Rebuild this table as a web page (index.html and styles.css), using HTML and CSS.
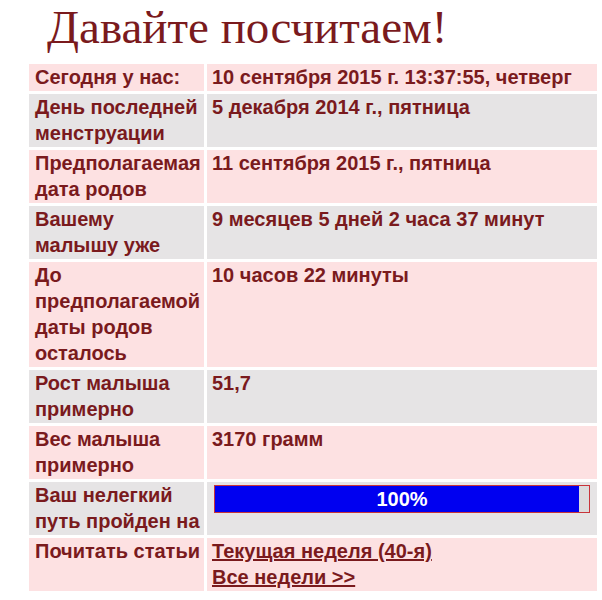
FILE: index.html
```html
<!DOCTYPE html>
<html lang="ru">
<head>
<meta charset="utf-8">
<title>Давайте посчитаем!</title>
<link rel="stylesheet" href="styles.css">
</head>
<body>
<h1 class="title">Давайте посчитаем!</h1>
<div class="calc">
  <div class="cell lbl pink">Сегодня у нас:</div>
  <div class="cell val pink">10 сентября 2015 г. 13:37:55, четверг</div>

  <div class="cell lbl gray">День последней менструации</div>
  <div class="cell val gray">5 декабря 2014 г., пятница</div>

  <div class="cell lbl pink">Предполагаемая дата родов</div>
  <div class="cell val pink">11 сентября 2015 г., пятница</div>

  <div class="cell lbl gray">Вашему малышу уже</div>
  <div class="cell val gray">9 месяцев 5 дней 2 часа 37 минут</div>

  <div class="cell lbl pink">До предполагаемой даты родов осталось</div>
  <div class="cell val pink">10 часов 22 минуты</div>

  <div class="cell lbl gray">Рост малыша примерно</div>
  <div class="cell val gray">51,7</div>

  <div class="cell lbl pink">Вес малыша примерно</div>
  <div class="cell val pink">3170 грамм</div>

  <div class="cell lbl gray">Ваш нелегкий путь пройден на</div>
  <div class="cell val gray">
    <div class="bar">
      <div class="bar-fill" style="width: 97.3%"></div>
      <span class="bar-text">100%</span>
    </div>
  </div>

  <div class="cell lbl pink">Почитать статьи</div>
  <div class="cell val pink">
    <a class="link" href="#">Текущая неделя (40-я)</a><br>
    <a class="link" href="#">Все недели &gt;&gt;</a>
  </div>
</div>
</body>
</html>
```

FILE: styles.css
```css
html, body {
  margin: 0;
  padding: 0;
  background: #ffffff;
}

.title {
  margin: 0;
  padding: 0 0 0 47px;
  font-family: "Liberation Serif", "Times New Roman", serif;
  font-weight: normal;
  font-size: 47px;
  line-height: 54px;
  color: #7a1a1d;
}

.calc {
  display: grid;
  grid-template-columns: 175px 390px;
  column-gap: 3px;
  row-gap: 3px;
  margin: 10px 0 0 29px;
  font-family: "Liberation Sans", Arial, sans-serif;
  font-weight: bold;
  font-size: 20px;
  line-height: 26px;
  color: #7a1a1d;
}

.cell {
  padding: 0 3px 1px 6px;
}

.val {
  padding-left: 5px;
}

.pink {
  background: #fde1e2;
}

.gray {
  background: #e6e4e5;
}

.bar {
  position: relative;
  margin: 3px 4px 0 2px;
  height: 26px;
  border: 1px solid #c8343a;
  background: #dcdcdc;
}

.bar-fill {
  height: 100%;
  background: #0000f0;
}

.bar-text {
  position: absolute;
  left: 0;
  right: 0;
  top: 0;
  text-align: center;
  color: #ffffff;
  line-height: 26px;
}

.link {
  color: #7a1a1d;
  text-decoration: underline;
}
```
